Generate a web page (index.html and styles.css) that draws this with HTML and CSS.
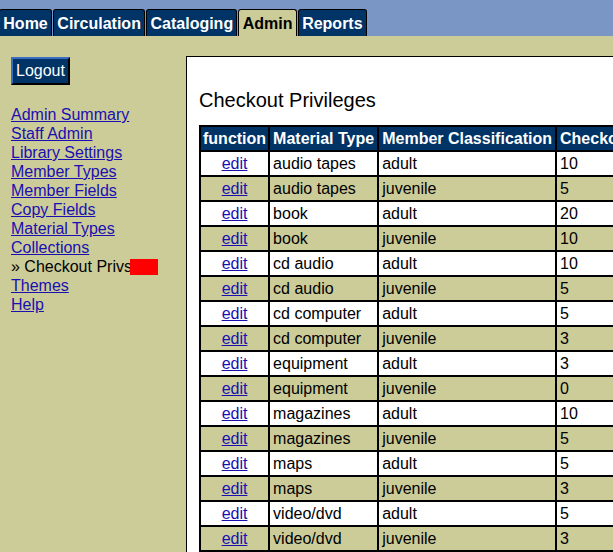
FILE: index.html
```html
<!DOCTYPE html>
<html>
<head>
<meta charset="utf-8">
<title>Admin - Checkout Privileges</title>
<link rel="stylesheet" href="styles.css">
</head>
<body>
<div class="tabbar">
  <a class="tab" href="#">Home</a>
  <a class="tab" href="#">Circulation</a>
  <a class="tab" href="#">Cataloging</a>
  <a class="tab tab-active" href="#">Admin</a>
  <a class="tab" href="#">Reports</a>
</div>
<div class="page">
  <div class="sidebar">
    <button class="logout" type="button">Logout</button>
    <ul class="nav">
      <li><a href="#">Admin Summary</a></li>
      <li><a href="#">Staff Admin</a></li>
      <li><a href="#">Library Settings</a></li>
      <li><a href="#">Member Types</a></li>
      <li><a href="#">Member Fields</a></li>
      <li><a href="#">Copy Fields</a></li>
      <li><a href="#">Material Types</a></li>
      <li><a href="#">Collections</a></li>
      <li class="current">&raquo; Checkout Privs<span class="redact"></span></li>
      <li><a href="#">Themes</a></li>
      <li><a href="#">Help</a></li>
    </ul>
  </div>
  <div class="main">
    <h2 class="title">Checkout Privileges</h2>
    <table class="privs">
      <thead>
        <tr><th class="fn">function</th><th>Material Type</th><th>Member Classification</th><th>Checkout Limit</th><th>Renewal Limit</th></tr>
      </thead>
      <tbody>
        <tr class="odd"><td class="fn"><a href="#">edit</a></td><td>audio tapes</td><td>adult</td><td>10</td><td>0</td></tr>
        <tr class="even"><td class="fn"><a href="#">edit</a></td><td>audio tapes</td><td>juvenile</td><td>5</td><td>0</td></tr>
        <tr class="odd"><td class="fn"><a href="#">edit</a></td><td>book</td><td>adult</td><td>20</td><td>0</td></tr>
        <tr class="even"><td class="fn"><a href="#">edit</a></td><td>book</td><td>juvenile</td><td>10</td><td>0</td></tr>
        <tr class="odd"><td class="fn"><a href="#">edit</a></td><td>cd audio</td><td>adult</td><td>10</td><td>0</td></tr>
        <tr class="even"><td class="fn"><a href="#">edit</a></td><td>cd audio</td><td>juvenile</td><td>5</td><td>0</td></tr>
        <tr class="odd"><td class="fn"><a href="#">edit</a></td><td>cd computer</td><td>adult</td><td>5</td><td>0</td></tr>
        <tr class="even"><td class="fn"><a href="#">edit</a></td><td>cd computer</td><td>juvenile</td><td>3</td><td>0</td></tr>
        <tr class="odd"><td class="fn"><a href="#">edit</a></td><td>equipment</td><td>adult</td><td>3</td><td>0</td></tr>
        <tr class="even"><td class="fn"><a href="#">edit</a></td><td>equipment</td><td>juvenile</td><td>0</td><td>0</td></tr>
        <tr class="odd"><td class="fn"><a href="#">edit</a></td><td>magazines</td><td>adult</td><td>10</td><td>0</td></tr>
        <tr class="even"><td class="fn"><a href="#">edit</a></td><td>magazines</td><td>juvenile</td><td>5</td><td>0</td></tr>
        <tr class="odd"><td class="fn"><a href="#">edit</a></td><td>maps</td><td>adult</td><td>5</td><td>0</td></tr>
        <tr class="even"><td class="fn"><a href="#">edit</a></td><td>maps</td><td>juvenile</td><td>3</td><td>0</td></tr>
        <tr class="odd"><td class="fn"><a href="#">edit</a></td><td>video/dvd</td><td>adult</td><td>5</td><td>0</td></tr>
        <tr class="even"><td class="fn"><a href="#">edit</a></td><td>video/dvd</td><td>juvenile</td><td>3</td><td>0</td></tr>
      </tbody>
    </table>
  </div>
</div>
</body>
</html>
```
FILE: styles.css
```css
html, body {
  margin: 0;
  padding: 0;
  overflow: hidden;
}
body {
  background: #cccc99;
  font-family: "Liberation Sans", Arial, sans-serif;
  font-size: 16px;
  color: #000;
  width: 613px;
  height: 552px;
}
a {
  color: #1a0fb0;
}

/* tab bar */
.tabbar {
  display: flex;
  align-items: flex-end;
  height: 36px;
  box-sizing: border-box;
  padding-top: 9px;
  background: #7a96c4;
}
.tab {
  display: block;
  border: 1px solid #000;
  border-bottom: none;
  border-radius: 3px 3px 0 0;
  padding: 5px 3.3px 3px 3.3px;
  line-height: 18px;
  font-weight: bold;
  font-size: 16px;
  color: #fff;
  background: #003366;
  text-decoration: none;
  margin-right: 1px;
}
.tab:first-child {
  margin-left: -1px;
}
.tab-active {
  background: #cccc99;
  color: #000;
}

/* layout */
.page {
  display: flex;
  align-items: flex-start;
}
.sidebar {
  flex: 0 0 186px;
  box-sizing: border-box;
  padding: 21px 0 0 11px;
}
.logout {
  display: block;
  font-family: "Liberation Sans", Arial, sans-serif;
  font-size: 16px;
  line-height: 18px;
  color: #fff;
  background: #003366;
  border: 2px solid;
  border-color: #3a6cc0 #000 #000 #3a6cc0;
  padding: 3px 3px;
  margin: 0;
  cursor: pointer;
}
.nav {
  list-style: none;
  margin: 20px 0 0 0;
  padding: 0;
  line-height: 19px;
}
.nav .current {
  color: #000;
}
.redact {
  display: inline-block;
  width: 28px;
  height: 16px;
  background: #ff0000;
  margin-left: -2px;
  vertical-align: -3px;
}

/* main panel */
.main {
  flex: 1 1 auto;
  min-width: 0;
  height: 520px;
  margin-top: 20px;
  background: #fff;
  border-top: 1px solid #000;
  border-left: 1px solid #000;
  padding: 32px 0 0 12px;
  overflow: hidden;
}
.title {
  margin: 0 0 13px 0;
  font-size: 20px;
  font-weight: normal;
  line-height: 23px;
}
.privs {
  border: 1px solid #000;
  border-spacing: 0;
}
.privs th,
.privs td {
  border: 1px solid #000;
  padding: 2px 3px;
  line-height: 19px;
  white-space: nowrap;
  text-align: left;
}
.privs th {
  background: #003366;
  color: #fff;
  font-weight: bold;
}
.privs th.fn,
.privs td.fn {
  padding-left: 2px;
  padding-right: 2px;
}
.privs td.fn {
  text-align: center;
}
.privs tr.odd td {
  background: #fff;
}
.privs tr.even td {
  background: #cccc99;
}
```
